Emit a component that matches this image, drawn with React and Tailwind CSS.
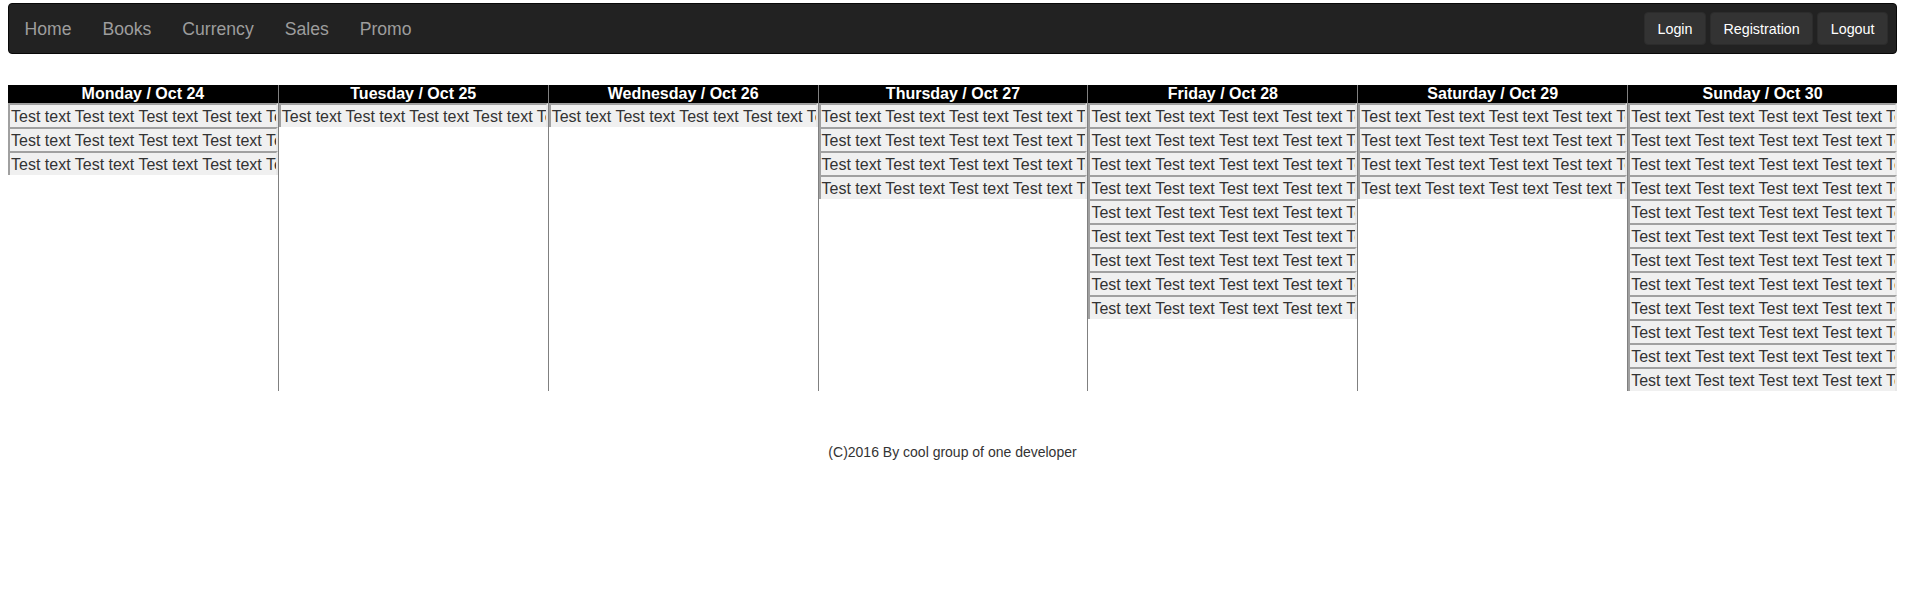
import React from "react";

const days = [
  { label: "Monday / Oct 24", rows: 3 },
  { label: "Tuesday / Oct 25", rows: 1 },
  { label: "Wednesday / Oct 26", rows: 1 },
  { label: "Thursday / Oct 27", rows: 4 },
  { label: "Friday / Oct 28", rows: 9 },
  { label: "Saturday / Oct 29", rows: 4 },
  { label: "Sunday / Oct 30", rows: 12 },
];

const text = "Test text Test text Test text Test text Test text Test text Test text Test text";

export default function App() {
  return (
    <div
      className="min-h-[605px] bg-white pl-[8px] pr-[16px] pt-[3px]"
      style={{ fontFamily: '"Liberation Sans", Arial, Helvetica, sans-serif' }}
    >
      <nav className="flex h-[51px] items-center justify-between rounded-[4px] border border-[#080808] bg-[#222222] pl-[0px] pr-[8px]">
        <ul className="flex items-center">
          {["Home", "Books", "Currency", "Sales", "Promo"].map((l) => (
            <li key={l} className="px-[15.5px] text-[17.6px] leading-[20px] text-[#9d9d9d]">
              {l}
            </li>
          ))}
        </ul>
        <div className="flex items-center gap-[4px]">
          {["Login", "Registration", "Logout"].map((b) => (
            <button
              key={b}
              className="h-[33px] rounded-[4px] border border-[#2c2c2c] bg-[#333333] px-[12.5px] text-[14.3px] leading-[20px] text-white"
            >
              {b}
            </button>
          ))}
        </div>
      </nav>

      <div className="mt-[31px] grid grid-cols-7">
        {days.map((d, i) => (
          <div
            key={d.label}
            className={`flex min-w-0 flex-col ${i > 0 ? "border-l border-[#808080]" : ""}`}
          >
            <div className="h-[18px] bg-black text-center text-[16px] font-bold leading-[18px] text-white">
              {d.label}
            </div>
            {Array.from({ length: d.rows }).map((_, r) => (
              <div
                key={r}
                className="h-[24px] overflow-hidden whitespace-nowrap border-t-2 border-l-2 border-r-2 border-t-[#a0a0a0] border-l-[#a0a0a0] border-r-[#e8e8e8] bg-[#f0f0f0] pl-[1px] text-[16px] leading-[23px] text-[#333333]"
              >
                {text}
              </div>
            ))}
          </div>
        ))}
      </div>

      <footer className="mt-[51px] text-center text-[14px] leading-[20px] text-[#333333]">
        (C)2016 By cool group of one developer
      </footer>
    </div>
  );
}
